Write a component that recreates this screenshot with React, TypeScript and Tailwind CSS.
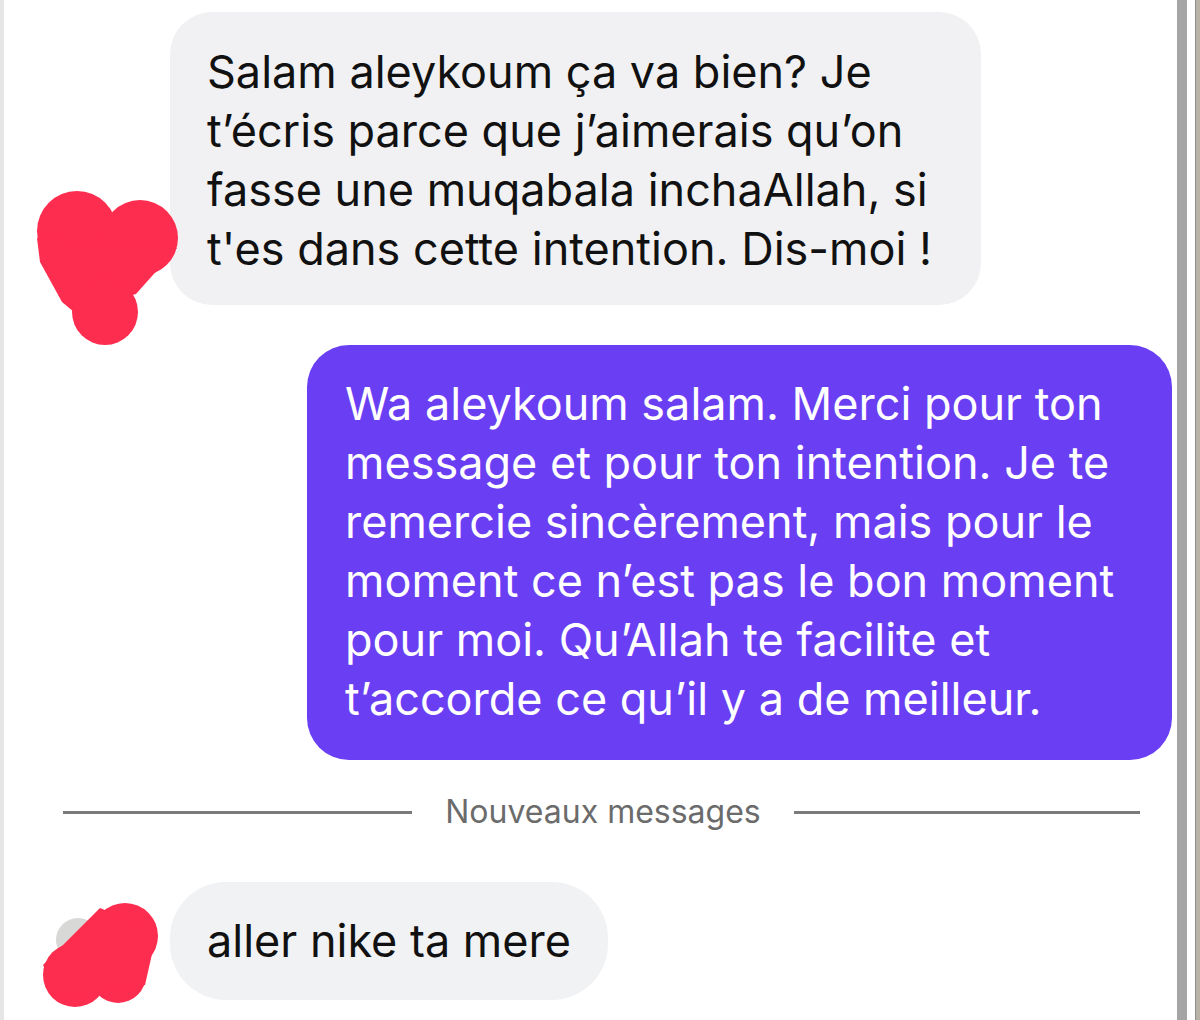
import React from "react";

const grayLines1 = [
  "Salam aleykoum ça va bien? Je",
  "t\u2019écris parce que j\u2019aimerais qu\u2019on",
  "fasse une muqabala inchaAllah, si",
  "t'es dans cette intention. Dis-moi !",
];

const purpleLines = [
  "Wa aleykoum salam. Merci pour ton",
  "message et pour ton intention. Je te",
  "remercie sincèrement, mais pour le",
  "moment ce n\u2019est pas le bon moment",
  "pour moi. Qu\u2019Allah te facilite et",
  "t\u2019accorde ce qu\u2019il y a de meilleur.",
];

function Blob1() {
  return (
    <svg className="absolute left-0 top-0" width="200" height="360" viewBox="0 0 200 360">
      <g fill="#fd2d4f">
        <circle cx="77" cy="231" r="40" />
        <circle cx="140" cy="238" r="38" />
        <polygon points="37,238 177,248 136,294 74,312 62,302 40,262" />
        <circle cx="105" cy="312" r="33" />
      </g>
    </svg>
  );
}

function Blob2() {
  return (
    <svg className="absolute left-0 top-[880px]" width="200" height="140" viewBox="0 880 200 140">
      <ellipse cx="78" cy="940" rx="22" ry="22" fill="#d8d8d6" />
      <g fill="#fd2d4f">
        <circle cx="125" cy="936" r="33" />
        <circle cx="118" cy="975" r="28" />
        <circle cx="75" cy="975" r="32" />
        <polygon points="43,965 100,908 157,932 145,985 60,1000" />
      </g>
    </svg>
  );
}

export default function App() {
  return (
    <div
      className="relative w-[1200px] h-[1020px] overflow-hidden bg-white flex"
      style={{ fontFamily: "Inter, 'Liberation Sans', sans-serif" }}
    >
      <div className="w-[4px] h-full bg-[#e6e6e6]" />
      <div className="flex-1 flex flex-col">
        <div className="pt-[12px] pl-[166px]">
          <div className="w-[811px] h-[293px] rounded-[42px] bg-[#f1f1f3] pl-[37px] pt-[30px] text-[#111] text-[45px] leading-[59px]">
            {grayLines1.map((l) => (
              <div key={l} className="whitespace-nowrap">{l}</div>
            ))}
          </div>
        </div>
        <div className="mt-[40px] pl-[303px]">
          <div className="w-[865px] h-[415px] rounded-[42px] bg-[#6a3ef3] pl-[38px] pt-[29px] text-white text-[45px] leading-[59px]">
            {purpleLines.map((l) => (
              <div key={l} className="whitespace-nowrap">{l}</div>
            ))}
          </div>
        </div>
        <div className="mt-[37px] flex items-center pl-[59px] w-[1136px] h-[30px]">
          <div className="w-[349px] h-[3px] bg-[#7a7a7a]" />
          <div className="flex-1 text-center text-[32px] text-[#6b6b6b] leading-[30px]">Nouveaux messages</div>
          <div className="w-[346px] h-[3px] bg-[#7a7a7a]" />
        </div>
        <div className="mt-[55px] pl-[166px]">
          <div className="w-[438px] h-[118px] rounded-[56px] bg-[#f1f2f4] pl-[37px] flex items-center text-[#111] text-[45px]">
            aller nike ta mere
          </div>
        </div>
      </div>
      <div className="w-[10px] h-full bg-[#a5a5a5] ml-[1px]" />
      <div className="w-[8px] h-full bg-white" />
      <div className="w-[5px] h-full bg-[#b9b2a7] border-l border-[#8f8f8f]" />
      <Blob1 />
      <Blob2 />
    </div>
  );
}
